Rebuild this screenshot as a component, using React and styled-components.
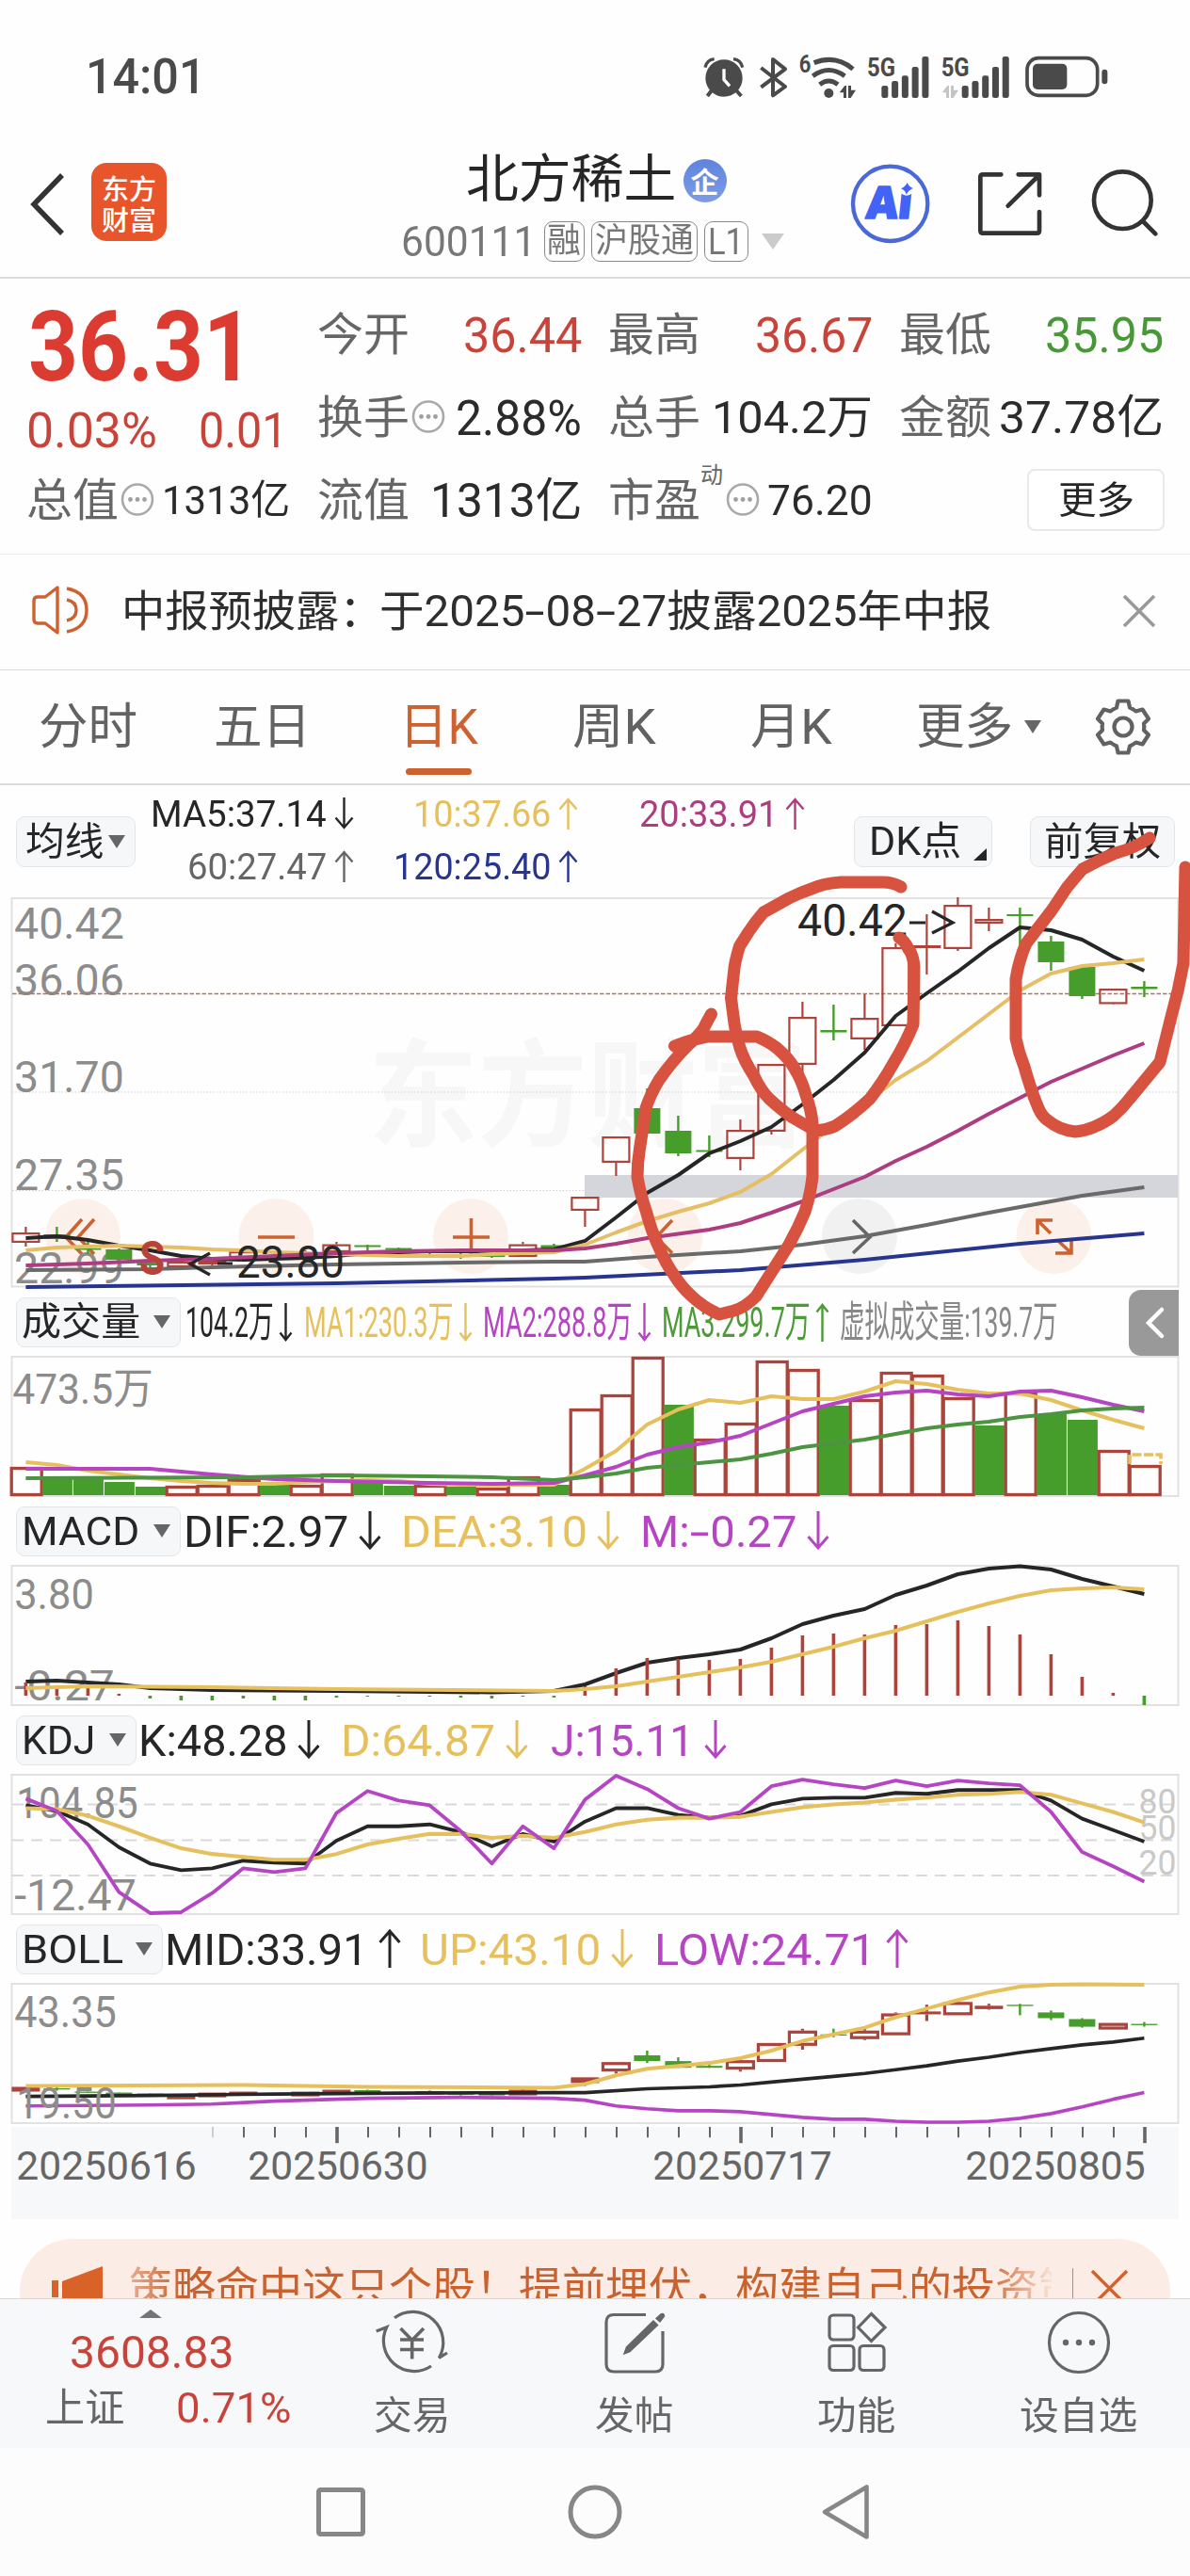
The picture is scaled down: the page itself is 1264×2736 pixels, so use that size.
import React, { useLayoutEffect, useRef, useState } from "react";
import styled, { createGlobalStyle } from "styled-components";

const INK = "#262626";
const GREY = "#666666";
const LABEL = "#8c8c8c";
const RED = "#c8443a";
const CANDLE_RED = "#ad443c";
const CANDLE_GREEN = "#479d2c";
const YELLOW = "#e5c05c";
const PURPLE = "#b545c2";
const MAGENTA = "#ad3c80";
const BLUE = "#27358f";
const ORANGE = "#cd6130";
const FONT = `Roboto, "Noto Sans CJK SC", sans-serif`;

const GlobalStyle = createGlobalStyle`
  *, *::before, *::after { box-sizing: border-box; }
  html, body { margin: 0; padding: 0; }
  body { background: #fefefe; font-family: ${FONT}; color: ${INK}; }
  svg { display: block; flex: none; overflow: visible; }
`;

const Screen = styled.div`
  width: 1264px;
  min-height: 2736px;
  display: flex;
  flex-direction: column;
  overflow: hidden;
`;

/* ---------- text that is squeezed or stretched to a set width ---------- */

const FitBox = styled.span`
  display: inline-block;
  flex: none;
  width: calc(${(p) => p.$w}px + 0.08em);
  margin: 0 -0.04em;
  padding-top: 0.05em;
  font-size: ${(p) => p.$size}px;
  line-height: 1.2;
  font-weight: ${(p) => p.$weight || 400};
  color: ${(p) => p.$color || "inherit"};
  white-space: nowrap;
`;

const FitInner = styled.span`
  display: inline-block;
  transform-origin: 0 50%;
`;

function Fit({ w, size, weight, color, children }) {
  const ref = useRef(null);
  const [scale, setScale] = useState(1);
  useLayoutEffect(() => {
    const natural = ref.current.offsetWidth;
    if (natural) setScale((w + size * 0.08) / natural);
  }, [w, size]);
  return (
    <FitBox $w={w} $size={size} $weight={weight} $color={color}>
      <FitInner ref={ref} style={{ transform: `scaleX(${scale})` }}>
        {children}
      </FitInner>
    </FitBox>
  );
}

const LongHyphen = styled.span`
  display: inline-block;
  width: 0.46em;
  text-align: center;
  transform: scaleX(1.6);
`;

const withHyphens = (text) =>
  text.split("-").flatMap((part, i) => (i ? [<LongHyphen key={i}>-</LongHyphen>, part] : [part]));

/* ---------- status bar ---------- */

const StatusBar = styled.div`
  height: 155px;
  padding: 6px 84px 0 93px;
  display: flex;
  align-items: center;
  justify-content: space-between;
`;

function UpDown({ x, color }) {
  return (
    <path
      fill={color}
      d={`M${x} 172 L${x + 17} 150 H${x + 22} V189 H${x + 13} V172 Z M${x + 28} 150 H${x + 37} V164 H${x + 52} L${x + 36} 189 H${x + 28} Z`}
    />
  );
}

function Signal({ x }) {
  return [150, 135, 118, 90, 57].map((top, i) => (
    <rect key={i} x={x + i * 32.3} y={top} width="21" height={189 - top} rx="7" fill="#4a4a4a" />
  ));
}

function StatusIcons() {
  const c = "#4a4a4a";
  return (
    <svg width="434" height="50" viewBox="50 45 1302 150" fontFamily="Roboto" fontWeight="700">
      <circle cx="119" cy="126" r="59" fill={c} />
      <path d="M59 92 Q64 68 88 65 M178 92 Q173 68 149 65" stroke={c} strokeWidth="10" fill="none" />
      <path d="M80 165 L66 183 M158 165 L174 183" stroke={c} strokeWidth="12" />
      <path d="M119 97 V131 L137 151" stroke="#fff" strokeWidth="10" fill="none" />
      <path d="M237 93 L314 153 L275 181 V66 L314 97 L237 155" stroke={c} strokeWidth="12" fill="none" strokeLinejoin="round" />
      <text x="358" y="108" fontSize="76" textLength="38" lengthAdjust="spacingAndGlyphs" fill={c}>6</text>
      <circle cx="453" cy="174" r="15" fill={c} />
      <path d="M424 146 Q453 124 482 146 M402 119 Q453 82 504 119 M406 77 Q475 50 530 97" stroke={c} strokeWidth="15" fill="none" />
      <UpDown x={487} color={c} />
      <text x="575" y="120" fontSize="84" textLength="90" lengthAdjust="spacingAndGlyphs" fill={c}>5G</text>
      <Signal x={621} />
      <text x="811" y="120" fontSize="84" textLength="90" lengthAdjust="spacingAndGlyphs" fill={c}>5G</text>
      <UpDown x={814} color="#c4c4c4" />
      <Signal x={877} />
      <rect x="1085" y="62" width="224" height="119" rx="36" fill="none" stroke={c} strokeWidth="11" />
      <rect x="1103" y="80" width="109" height="82" rx="15" fill={c} />
      <rect x="1323" y="98" width="18" height="47" rx="9" fill={c} />
    </svg>
  );
}

/* ---------- title bar ---------- */

const TitleBar = styled.header`
  height: 141px;
  border-bottom: 2px solid #dcdcdc;
  display: flex;
`;

const TitleLeft = styled.div`
  width: 427px;
  padding: 18px 0 0 32px;
  display: flex;
  align-items: flex-start;
  gap: 28px;
`;

const BackIcon = styled.svg`
  margin-top: 11px;
`;

const AppLogo = styled.div`
  width: 80px;
  height: 83px;
  padding-top: 10px;
  border-radius: 16px;
  background: #e8552b;
  color: #fff;
  display: flex;
  flex-direction: column;
  align-items: center;
  font-family: "Noto Sans CJK SC", sans-serif;
  font-weight: 500;
  font-size: 29px;
  line-height: 33px;
`;

const TitleCenter = styled.div`
  width: 406px;
  display: flex;
  flex-direction: column;
  align-items: center;
`;

const StockName = styled.div`
  height: 68px;
  padding-left: 9px;
  display: flex;
  align-items: center;
  gap: 9px;
`;

const CorpBadge = styled.span`
  width: 46px;
  height: 46px;
  margin-top: 5px;
  border-radius: 50%;
  background: linear-gradient(#5f83de, #7d9be6);
  color: #fff;
  font: 700 30px/44px "Noto Sans CJK SC", sans-serif;
  text-align: center;
`;

const StockMeta = styled.div`
  height: 66px;
  display: flex;
  align-items: center;
  color: #777;
`;

const Tag = styled.span`
  height: 43px;
  margin-left: ${(p) => p.$ml || 7}px;
  width: ${(p) => p.$w}px;
  border: 1.5px solid #8a8a8a;
  border-radius: 9px;
  display: flex;
  align-items: center;
  justify-content: center;
`;

const MetaCaret = styled.span`
  margin-left: 14px;
  border: 12px solid transparent;
  border-top: 17px solid #cbcbcb;
  border-bottom: 0;
`;

const TitleRight = styled.div`
  flex: 1;
  padding: 14px 0 0 68px;
  display: flex;
`;

function TitleActions() {
  return (
    <svg width="334" height="90" viewBox="513 387 1002 270" fill="none" stroke="#333" strokeWidth="14" strokeLinecap="round" strokeLinejoin="round">
      <circle cx="647" cy="529" r="119" stroke="#4b68d9" strokeWidth="13" />
      <text transform="translate(567 575) skewX(-6)" fontFamily="Open Sans" fontWeight="800" fontSize="142" textLength="146" lengthAdjust="spacingAndGlyphs" fill="#4263f5" stroke="#4263f5" strokeWidth="5">Ai</text>
      <circle cx="699" cy="478" r="25" fill="#fefefe" stroke="none" />
      <path d="M701 462 Q706 475 720 480 Q706 485 698 500 Q694 485 681 481 Q695 475 701 462 Z" fill="#4263f5" stroke="none" />
      <path d="M1000 436 H942 Q934 436 934 444 V615 Q934 623 942 623 H1114 Q1122 623 1122 615 V555 M1055 436 H1122 V502 M1022 536 L1118 441" />
      <circle cx="1387" cy="518" r="91" />
      <path d="M1452 585 L1492 625" />
    </svg>
  );
}

/* ---------- quote panel ---------- */

const QuoteGrid = styled.section`
  height: 293px;
  padding: 15px 30px 13px;
  border-bottom: 1px solid #ebebeb;
  display: grid;
  grid-template-columns: repeat(4, 277px);
  grid-template-rows: repeat(3, 88px);
  column-gap: 32px;
`;

const PriceCell = styled.div`
  grid-row: span 2;
  padding-top: 6px;
  display: flex;
  flex-direction: column;
`;

const PriceLine = styled.div`
  height: 100px;
  padding-left: 4px;
  display: flex;
  align-items: center;
`;

const ChangeLine = styled.div`
  height: 60px;
  margin-top: 9px;
  padding-right: 4px;
  display: flex;
  align-items: center;
  justify-content: space-between;
`;

const QuoteCell = styled.div`
  display: flex;
  align-items: center;
  justify-content: space-between;
`;

const QuoteLabel = styled.span`
  display: flex;
  align-items: center;
  gap: 4px;
  color: ${GREY};
`;

const Superscript = styled.span`
  align-self: flex-start;
  margin: -12px -1px 0 -2px;
  font-size: 24px;
  line-height: 32px;
`;

const MoreButton = styled.button`
  width: 146px;
  height: 66px;
  margin: 0 -3px 0 auto;
  padding: 0;
  border: 2px solid #e9e9e9;
  border-radius: 8px;
  background: #fff;
  font-family: inherit;
`;

function Info() {
  return (
    <svg width="36" height="36" viewBox="0 0 36 36">
      <circle cx="18" cy="17.5" r="16" fill="none" stroke="#a9a9a9" strokeWidth="2.6" />
      {[10.5, 18, 25.5].map((x) => (
        <circle key={x} cx={x} cy="17.5" r="2.4" fill="#a0a0a0" />
      ))}
    </svg>
  );
}

function Quote({ label, info, sup, value, w, size = 51, color = "#2b2b2b" }) {
  return (
    <QuoteCell>
      <QuoteLabel>
        <Fit w={94} size={48}>{label}</Fit>
        {sup && <Superscript>{sup}</Superscript>}
        {info && <Info />}
      </QuoteLabel>
      <Fit w={w} size={size} color={color}>{value}</Fit>
    </QuoteCell>
  );
}

/* ---------- notice ---------- */

const Notice = styled.div`
  height: 123px;
  padding: 0 36px 4px 34px;
  border-bottom: 1.5px solid #dadada;
  display: flex;
  align-items: center;
`;

const NoticeText = styled.div`
  flex: 1;
  padding-left: 36px;
  display: flex;
  align-items: center;
`;

/* ---------- tabs ---------- */

const Tabs = styled.nav`
  height: 122px;
  border-bottom: 2px solid #dadada;
  display: flex;
`;

const Tab = styled.div`
  position: relative;
  width: 187px;
  padding-left: ${(p) => p.$left || 0}px;
  padding-right: ${(p) => p.$right || 0}px;
  display: flex;
  align-items: center;
  justify-content: center;
  gap: 13px;
  color: ${(p) => (p.$active ? ORANGE : "#626262")};
  &::after {
    content: "";
    display: ${(p) => (p.$active ? "block" : "none")};
    position: absolute;
    left: 57px;
    top: 104px;
    width: 70px;
    height: 7px;
    border-radius: 4px;
    background: ${ORANGE};
  }
`;

const Caret = styled.span`
  border: ${(p) => (p.$s || 18) / 2}px solid transparent;
  border-top: 14px solid ${GREY};
  border-bottom: 0;
`;

const GearSlot = styled.div`
  flex: 1;
  display: flex;
  align-items: center;
  justify-content: center;
`;

function Gear() {
  return (
    <svg width="62" height="62" viewBox="0 0 62 62" fill="none" stroke="#626262" strokeWidth="4.2" strokeLinejoin="round">
      <path d="M25.500 3.500 H36.500 L38 10.500 Q41.500 12 44.500 14.500 L51.500 12.500 L58 22.500 L53 27.500 Q53.600 31 53 34.500 L58 39.500 L51.500 49.500 L44.500 47.500 Q41.500 50 38 51.500 L36.500 58.500 H25.500 L24 51.500 Q20.500 50 17.500 47.500 L10.500 49.500 L4 39.500 L9 34.500 Q8.400 31 9 27.500 L4 22.500 L10.500 12.500 L17.500 14.500 Q20.500 12 24 10.500 Z" />
      <circle cx="31" cy="31" r="9.500" />
    </svg>
  );
}

/* ---------- indicator legends ---------- */

const ChartArea = styled.main`
  position: relative;
`;

const Pill = styled.span`
  flex: none;
  width: ${(p) => p.$w}px;
  height: ${(p) => p.$h || 53}px;
  padding: 0 10px 0 ${(p) => p.$pl || 7}px;
  border: 1.5px solid #e3e6e9;
  border-radius: 9px;
  background: #f6f7f9;
  display: flex;
  align-items: center;
  justify-content: space-between;
`;

const CornerMark = styled.span`
  align-self: flex-end;
  margin: 0 -5px 6px 0;
  border-left: 14px solid transparent;
  border-bottom: 13px solid ${INK};
`;

const AverageBar = styled.div`
  height: 119px;
  padding-left: 17px;
  display: flex;
  align-items: center;
`;

const AverageGrid = styled.div`
  height: 119px;
  padding-top: 2px;
  display: grid;
  grid-template-columns: 232px 238px 241px;
  grid-template-rows: 56px 56px;
`;

const AverageItem = styled.div`
  display: flex;
  align-items: center;
  justify-content: flex-end;
  gap: 9px;
`;

const AverageButtons = styled.div`
  display: flex;
  gap: 40px;
  margin-left: 52px;
`;

const IndicatorBar = styled.div`
  height: 72px;
  padding-left: 17px;
  display: flex;
  align-items: center;
`;

const IndicatorItem = styled.span`
  margin-left: ${(p) => p.$ml}px;
  display: flex;
  align-items: center;
  gap: ${(p) => p.$gap}px;
`;

const CollapseButton = styled.button`
  width: 53px;
  height: 70px;
  margin: 2px 12px 0 auto;
  padding: 0 0 0 17px;
  border: 0;
  border-radius: 13px 0 0 13px;
  background: #999;
`;

function Arrow({ up, color, w = 24, h = 41, sw = 3 }) {
  const m = w / 2;
  const d = up
    ? `M${m} ${h} V2 M1.500 ${m + 2} L${m} 2 L${w - 1.5} ${m + 2}`
    : `M${m} 0 V${h - 2} M1.500 ${h - m - 2} L${m} ${h - 2} L${w - 1.5} ${h - m - 2}`;
  return (
    <svg width={w} height={h} viewBox={`0 0 ${w} ${h}`} fill="none" stroke={color} strokeWidth={sw}>
      <path d={d} />
    </svg>
  );
}

function Average({ text, w, up, color }) {
  return (
    <AverageItem>
      <Fit w={w} size={39.5} color={color}>{text}</Fit>
      <Arrow up={up} color={color} w={21} h={34} sw={2.4} />
    </AverageItem>
  );
}

function Indicator({ name, nameW, pillW, size = 47, items, cjk, children }) {
  return (
    <IndicatorBar>
      <Pill $w={pillW}>
        <Fit w={nameW} size={cjk ? 41 : 43}>{name}</Fit>
        <Caret />
      </Pill>
      {items.map((it) => (
        <IndicatorItem key={it.text} $ml={it.ml} $gap={it.gap ?? 12}>
          <Fit w={it.w} size={size} color={it.color}>{withHyphens(it.text)}</Fit>
          {it.dir && <Arrow up={it.dir === "up"} color={it.color} w={it.aw || 24} sw={it.aw ? 2.4 : 3} />}
        </IndicatorItem>
      ))}
      {children}
    </IndicatorBar>
  );
}

/* ---------- charts ---------- */

const X = (i) => 27.4 + 33 * i;
const path = (list) =>
  "M" + list.map((p, i) => (Array.isArray(p) ? `${X(p[0])} ${p[1]}` : `${X(i)} ${p}`)).join(" L");

function Line({ data, color, w = 4 }) {
  return <path d={path(data)} fill="none" stroke={color} strokeWidth={w} strokeLinejoin="round" />;
}

function Frame({ y, h }) {
  return <rect x="12.500" y={y} width="1239" height={h} fill="none" stroke="#e2e2e2" strokeWidth="2" />;
}

function Label({ x, y, w, size = 47, color = LABEL, weight = 400, children }) {
  return (
    <text x={x - size * 0.04} y={y} fontFamily={FONT} fontSize={size} fontWeight={weight} fill={color} textLength={w + size * 0.08} lengthAdjust="spacingAndGlyphs">
      {children}
    </text>
  );
}

function Chart({ top, height, drawn = height, children }) {
  return (
    <svg width="1264" height={drawn} viewBox={`0 ${top} 1264 ${height}`} preserveAspectRatio="none">
      {children}
    </svg>
  );
}

function Candles({ data, sw = 2.2 }) {
  return data.map(([c, hi, a, b, lo], i) => {
    const x = X(i);
    const h = b - a;
    if (c === "g") {
      return (
        <g key={i} fill={CANDLE_GREEN}>
          <rect x={x - 1.2} y={hi} width="2.400" height={lo - hi} />
          <rect x={x - 14} y={a} width="28" height={Math.max(h, 1.3)} />
        </g>
      );
    }
    return (
      <g key={i} stroke={CANDLE_RED} strokeWidth={sw} fill="none">
        <path d={`M${x} ${hi} V${a} M${x} ${b} V${lo}`} />
        {h > sw * 2 ? (
          <rect x={x - 14} y={a + sw / 2} width="28" height={h - sw} />
        ) : (
          <rect x={x - 15} y={a} width="30" height={Math.max(h, 2)} fill={CANDLE_RED} stroke="none" />
        )}
      </g>
    );
  });
}

const candles = [
  ["r", 1303, 1309, 1320, 1324], ["g", 1303, 1311, 1316, 1319], ["g", 1318, 1326, 1327.5, 1332],
  ["g", 1326, 1327, 1338, 1338], ["g", 1338, 1341, 1344, 1347], ["r", 1338, 1340, 1346, 1346],
  ["r", 1338, 1339, 1343, 1345], ["r", 1329, 1329, 1336, 1336], ["g", 1332, 1333, 1335, 1338],
  ["r", 1328, 1330, 1336, 1338], ["r", 1319, 1321.5, 1330, 1330], ["g", 1322, 1322.5, 1324.5, 1328],
  ["g", 1325, 1325.5, 1327.5, 1328], ["r", 1329, 1329, 1331, 1335], ["g", 1331, 1333, 1334.5, 1337],
  ["g", 1331, 1333, 1335, 1336], ["r", 1319, 1321.5, 1335, 1335], ["g", 1321, 1322.5, 1327, 1327],
  ["r", 1271, 1271, 1286, 1303], ["r", 1207, 1207, 1235, 1249], ["g", 1156, 1177, 1204, 1204],
  ["g", 1185, 1201, 1225, 1228], ["g", 1206, 1221.5, 1223.5, 1229], ["r", 1189, 1200, 1231, 1243],
  ["r", 1130, 1130, 1202, 1205], ["r", 1064, 1080, 1131, 1145], ["g", 1067, 1094, 1096.5, 1105],
  ["r", 1056, 1081, 1104, 1115], ["r", 1002, 1006, 1090, 1090], ["r", 971, 1004, 1007, 1035],
  ["r", 953, 961, 1008, 1010], ["r", 964, 976, 981, 989], ["g", 964, 971, 973, 1012],
  ["g", 994, 1000, 1022, 1031], ["g", 1026, 1027, 1058, 1061], ["r", 1050, 1050, 1066.5, 1066],
  ["g", 1042, 1048, 1050.5, 1059],
];

const ma5 = [1315, 1313, 1317, 1323, 1328, 1334, 1337, 1338, 1337, 1336, 1334, 1331, 1330, 1329, 1329, 1329, 1328, 1327, 1318, 1293, 1267, 1248, 1225, 1212, 1197, 1173, 1147, 1118, 1079, 1055, 1032, 1007, 985, 988, 998, 1016, 1031];
const ma10 = [1328, 1325, 1324, 1323, 1324, 1325, 1327, 1328, 1330, 1331, 1332, 1333, 1334, 1334, 1334, 1332, 1331, 1330, 1322, 1309, 1297, 1287, 1278, 1266, 1247, 1221, 1196, 1173, 1147, 1127, 1102, 1077, 1052, 1034, 1026, 1023, 1019];
const ma20 = [[0, 1344], [2, 1342], [4, 1339], [6, 1337], [8, 1334], [10, 1331], [12, 1329], [14, 1328], [16, 1328], [17, 1328], [18, 1326], [19, 1321], [20, 1315], [22, 1306], [23, 1299], [24, 1288], [25, 1276], [26, 1263], [27, 1250], [28, 1233], [29, 1218], [30, 1201], [31, 1183], [32, 1166], [33, 1149], [34, 1135], [35, 1121], [36, 1108]];
const ma60 = [[0, 1349], [4, 1348], [6, 1346], [10, 1343], [14, 1341], [17, 1340], [18, 1340], [20, 1335], [23, 1329], [25, 1322], [27, 1313], [29, 1301], [31, 1288], [33, 1276], [34, 1270], [36, 1261]];
const ma120 = [[0, 1367], [10, 1363], [17, 1358], [18, 1357], [23, 1349], [27, 1338], [32, 1321], [36, 1310]];

function ToolCircle({ x, grey, d }) {
  return (
    <g>
      <circle cx={x} cy="1313" r="40" fill={grey ? "#f1f1f1" : "#fbf1ea"} />
      <path d={d} stroke={grey ? GREY : ORANGE} strokeWidth="3.600" fill="none" />
    </g>
  );
}

const tools = [
  { x: 88, d: "M87 1295 L70 1314 L87 1332 M100 1295 L83 1314 L100 1332" },
  { x: 293.5, d: "M274 1314 H313" },
  { x: 500, d: "M481 1314 H520 M500.500 1294 V1333" },
  { x: 706.5, d: "M714 1296 L697 1314 L714 1331" },
  { x: 913, grey: true, d: "M906 1296 L924 1314 L906 1331" },
  { x: 1119.5, d: "M1102 1311 V1296 H1118 M1102 1296 L1116 1310 M1138 1316 V1331 H1121 M1138 1331 L1123 1317" },
];

function CandleChart() {
  return (
    <Chart top={953} height={415}>
      <text x="391" y="1208" fontFamily="Noto Sans CJK SC" fontWeight="700" fontSize="124" textLength="466" lengthAdjust="spacingAndGlyphs" fill="#f7f7f8">东方财富</text>
      <Frame y={954} h={412.5} />
      <path d="M13 1160 H1251 M13 1264.500 H1251" stroke="#cfcfcf" strokeWidth="1.200" strokeDasharray="1.500 2" />
      <rect x="621" y="1248" width="630" height="24" fill="#d5d6dc" />
      {tools.map((t) => <ToolCircle key={t.x} {...t} />)}
      <Label x={17} y={997} w={113}>40.42</Label>
      <Label x={17} y={1057} w={113}>36.06</Label>
      <Label x={17} y={1160} w={113}>31.70</Label>
      <Label x={17} y={1264} w={113}>27.35</Label>
      <Label x={17} y={1363} w={113}>22.99</Label>
      <path d="M13 1055.500 H1251" stroke="#b3745c" strokeWidth="1.500" strokeDasharray="4.500 2" />
      <Candles data={candles} />
      <Line data={ma5} color={INK} />
      <Line data={ma10} color="#e5be66" />
      <Line data={ma20} color={MAGENTA} />
      <Line data={ma60} color="#6a6a6a" />
      <Line data={ma120} color={BLUE} />
      <Label x={150} y={1354} w={23} size={50} weight={700} color="#b8423a">S</Label>
      <path d="M223 1331 L202 1342.500 L223 1354 M231 1342 H247" stroke={INK} strokeWidth="3.200" fill="none" />
      <Label x={253} y={1357} w={111} size={48} color={INK}>23.80</Label>
      <Label x={849} y={994} w={113} size={48} color={INK}>40.42</Label>
      <path d="M966 980 H983 M990 968 L1012 980 L990 991" stroke={INK} strokeWidth="3.200" fill="none" />
    </Chart>
  );
}

const volumes = "r1558 g1569 g1571 g1574 g1579 r1578 r1577 r1571 g1577 r1577 r1565 g1575 g1578 r1577 g1579 r1580 r1568 g1577 r1496 r1481 r1441 g1492 r1528 r1511 r1445 r1454 g1493 r1486 r1457 r1460 r1484 g1514 r1479 g1502 g1508 r1540 r1556"
  .split(" ")
  .map((s) => [s[0], +s.slice(1)]);
const vma1 = [1553, 1556, 1562, 1566, 1570, 1573, 1575, 1576, 1576, 1574, 1573, 1572, 1573, 1576, 1577, 1577, 1577, 1577, 1560, 1541, 1513, 1497, 1487, 1490, 1483, 1486, 1486, 1478, 1467, 1470, 1476, 1480, 1480, 1487, 1498, 1508, 1517];
const vma2 = [[0, 1560], [4, 1560], [6, 1566], [8, 1571], [10, 1573], [13, 1575], [15, 1576], [17, 1575], [18, 1567], [19, 1558], [20, 1545], [21, 1537], [22, 1532], [23, 1525], [24, 1512], [25, 1499], [26, 1491], [27, 1483], [28, 1479], [29, 1477], [30, 1481], [31, 1483], [32, 1478], [33, 1477], [34, 1484], [35, 1492], [36, 1499]];
const vma3 = [[0, 1570], [7, 1569], [10, 1567], [13, 1568], [15, 1569], [17, 1572], [18, 1569], [19, 1565], [20, 1559], [21, 1556], [22, 1553], [23, 1550], [24, 1544], [25, 1537], [26, 1533], [27, 1529], [28, 1523], [29, 1517], [30, 1513], [31, 1510], [32, 1505], [33, 1502], [34, 1498], [35, 1496], [36, 1495]];

function VolumeChart() {
  return (
    <Chart top={1440} height={150}>
      <Frame y={1441} h={148} />
      <Label x={15} y={1491} w={146} size={45}>473.5万</Label>
      {volumes.map(([c, y], i) =>
        c === "g" ? (
          <rect key={i} x={X(i) - 15.5} y={y} width="32" height={1588 - y} fill={CANDLE_GREEN} />
        ) : (
          <rect key={i} x={X(i) - 15.2} y={y + 1.5} width="32" height={1586 - y} fill="#fefefe" stroke={CANDLE_RED} strokeWidth="3.300" />
        )
      )}
      <path d="M1200 1555 V1545 H1233 V1555" fill="none" stroke={YELLOW} strokeWidth="3.600" strokeDasharray="10 2.500" />
      <Line data={vma1} color={YELLOW} />
      <Line data={vma2} color={PURPLE} />
      <Line data={vma3} color="#4c9440" />
    </Chart>
  );
}

const macdBars = [1787, 1793, 1793, 1799, 1804, 1806, 1806, 1804, 1806, 1806, 1803, 1802, 1802, 1802, 1803, 1804, 1802, 1803, 1791, 1772, 1761, 1762, 1763, 1762, 1750, 1737, 1735, 1736, 1726, 1725, 1721, 1727, 1736, 1757, 1781, 1798, 1811];
const dif = [[0, 1786], [1, 1785], [2, 1787], [3, 1789], [4, 1793], [6, 1795], [10, 1796], [15, 1797.5], [17, 1796], [18, 1789], [19, 1777], [20, 1766], [21, 1761], [22, 1757], [23, 1752], [24, 1740], [25, 1725], [26, 1716], [27, 1709], [28, 1694], [29, 1684], [30, 1672], [31, 1666], [32, 1663.5], [33, 1667], [34, 1677], [35, 1685], [36, 1693]];
const dea = [[0, 1793], [2, 1791], [6, 1792], [10, 1794], [17, 1796], [18, 1794], [19, 1791], [20, 1786], [21, 1781], [22, 1776], [23, 1771], [24, 1765], [25, 1757], [26, 1749], [27, 1740], [28, 1732], [29, 1722], [30, 1712], [31, 1703], [32, 1695], [33, 1689], [34, 1687], [35, 1686], [36, 1688]];

function MacdChart() {
  return (
    <Chart top={1662} height={150}>
      <Frame y={1663} h={148} />
      <Label x={17} y={1709} w={81} size={45}>3.80</Label>
      <Label x={17} y={1806} w={103} size={45}>-0.27</Label>
      <Line data={dif} color={INK} />
      {macdBars.map((y, i) => (
        <rect key={i} x={X(i) - 1.8} y={Math.min(y, 1801)} width="3.600" height={Math.abs(1801 - y)} fill={y < 1801 ? CANDLE_RED : CANDLE_GREEN} />
      ))}
      <Line data={dea} color={YELLOW} />
    </Chart>
  );
}

const kLine = [1916, 1922, 1936, 1960, 1977, 1984, 1982, 1974, 1976, 1977, 1953, 1938, 1938, 1936, 1944, 1959, 1946, 1954, 1933, 1919, 1919, 1926, 1929, 1927, 1915, 1909, 1908, 1908, 1903, 1904, 1900, 1900, 1900, 1911, 1930, 1942, 1954];
const dLine = [1919, 1920, 1927, 1938, 1950, 1961, 1967, 1970, 1973, 1973, 1967, 1957, 1951, 1946, 1946, 1950, 1948, 1950, 1944, 1936, 1931, 1929, 1929, 1928, 1923, 1918, 1915, 1913, 1910, 1908, 1905, 1904, 1902, 1905, 1914, 1923, 1934];
const jLine = [1909, 1922, 1957, 2007, 2029, 2028, 2008, 1982, 1986, 1982, 1924, 1901, 1911, 1916, 1943, 1977, 1938, 1961, 1910, 1885, 1899, 1919, 1930, 1923, 1896, 1889, 1894, 1898, 1890, 1896, 1890, 1893, 1895, 1923, 1965, 1980, 1996];

function KdjChart() {
  return (
    <Chart top={1883} height={148} drawn={150}>
      <Frame y={1884} h={146} />
      <path d="M13 1915 H1250 M13 1952.500 H1250 M13 1989.500 H1250" stroke="#d9d9d9" strokeWidth="2" strokeDasharray="12 8" />
      <Label x={1211} y={1924} w={37} size={37} color="#c9c9c9">80</Label>
      <Label x={1211} y={1952} w={37} size={37} color="#c9c9c9">50</Label>
      <Label x={1211} y={1989} w={37} size={37} color="#c9c9c9">20</Label>
      <Label x={19} y={1929.5} w={126} size={45}>104.85</Label>
      <Label x={17} y={2026.5} w={126} size={45}>-12.47</Label>
      <Line data={kLine} color={INK} w={3.8} />
      <Line data={dLine} color={YELLOW} />
      <Line data={jLine} color={PURPLE} w={3.8} />
    </Chart>
  );
}

const bollCandles = [
  ["r", 2211, 2211, 2216, 2216], ["g", 2210, 2212.5, 2213.5, 2215], ["g", 2216, 2216, 2217, 2217],
  ["g", 2217, 2217, 2221, 2221], ["g", 2218, 2218, 2221, 2221], ["r", 2219, 2219, 2224, 2224],
  ["r", 2217, 2217, 2222, 2222], ["r", 2216, 2216, 2220, 2220], ["g", 2218, 2218, 2220, 2220],
  ["r", 2216, 2216, 2221, 2221], ["r", 2214, 2214, 2219, 2219], ["g", 2214, 2214.5, 2218, 2218],
  ["g", 2217, 2217, 2218, 2218], ["r", 2215, 2215.5, 2219, 2219], ["g", 2217, 2218, 2219, 2220],
  ["g", 2217, 2217, 2220, 2220], ["r", 2213, 2214, 2220, 2220], ["g", 2216, 2216, 2218, 2218],
  ["r", 2201, 2201, 2207, 2210], ["r", 2185, 2185, 2195, 2197], ["g", 2173, 2178, 2184, 2186],
  ["g", 2180, 2184, 2191, 2191], ["g", 2186, 2189, 2191, 2191], ["r", 2181, 2183, 2193, 2195],
  ["r", 2165, 2165, 2185, 2185], ["r", 2150, 2152, 2168, 2172], ["g", 2150, 2156, 2157, 2159],
  ["r", 2148, 2152, 2161, 2162], ["r", 2133, 2134, 2157, 2157], ["r", 2125, 2132, 2135, 2142],
  ["r", 2121, 2122, 2136, 2136], ["r", 2124, 2126, 2129.5, 2130], ["g", 2124, 2125, 2126, 2136],
  ["g", 2131, 2133, 2139, 2141], ["g", 2139, 2140, 2148, 2149], ["r", 2144, 2144, 2151, 2151],
  ["g", 2143, 2145, 2146, 2148],
];
const bollUp = [[0, 2210], [7, 2209], [11, 2211], [17, 2212], [18, 2208], [19, 2199], [20, 2192], [21, 2189], [22, 2186], [23, 2181], [24, 2173], [25, 2163], [26, 2156], [27, 2149], [28, 2138], [29, 2129], [30, 2120], [31, 2112], [32, 2106], [33, 2104], [34, 2103.5], [36, 2104]];
const bollMid = [[0, 2221], [4, 2220], [8, 2218.5], [12, 2217.5], [17, 2217], [18, 2217], [20, 2213], [22, 2211], [23, 2209], [24, 2206], [25, 2203], [26, 2200], [27, 2197], [28, 2193], [29, 2189], [30, 2184], [31, 2180], [32, 2175], [33, 2171], [34, 2167], [35, 2164], [36, 2160]];
const bollLow = [[0, 2231], [4, 2230], [6, 2229], [8, 2226], [11, 2223], [14, 2222], [17, 2223], [18, 2225], [19, 2231], [20, 2234], [21, 2236], [22, 2236], [23, 2237], [24, 2240], [25, 2243], [26, 2245], [27, 2245], [28, 2247], [29, 2248], [30, 2248], [31, 2247], [32, 2244], [33, 2239], [34, 2232], [35, 2224], [36, 2217]];

function BollChart() {
  return (
    <Chart top={2102} height={148} drawn={150}>
      <Frame y={2103} h={146} />
      <Candles data={bollCandles} sw={3.2} />
      <Line data={bollUp} color={YELLOW} />
      <Line data={bollMid} color={INK} w={3.6} />
      <Line data={bollLow} color={PURPLE} w={3.6} />
      <Label x={17} y={2148.5} w={105} size={45}>43.35</Label>
      <Label x={19} y={2244.5} w={103} size={45}>19.50</Label>
    </Chart>
  );
}

const majors = [10, 23, 36];

function TimeAxis() {
  const ticks = Array.from({ length: 31 }, (_, k) => k + 6);
  return (
    <Chart top={2250} height={100} drawn={101}>
      <rect x="12" y="2253" width="1240" height="97" fill="#f7f8fa" />
      {ticks.map((i) => {
        const major = majors.includes(i);
        return (
          <path key={i} d={`M${X(i) + 0.6} 2253 V${major ? 2270 : 2264}`} stroke={i === 6 ? "#ccc" : GREY} strokeWidth={major ? 3.6 : 2} />
        );
      })}
      <Label x={19} y={2308} w={188} size={43} color={GREY}>20250616</Label>
      <Label x={265} y={2308} w={188} size={43} color={GREY}>20250630</Label>
      <Label x={695} y={2308} w={187} size={43} color={GREY}>20250717</Label>
      <Label x={1027} y={2308} w={188} size={43} color={GREY}>20250805</Label>
    </Chart>
  );
}

const MarkerLayer = styled.svg`
  position: absolute;
  left: 0;
  top: 0;
  pointer-events: none;
`;

function Markers() {
  return (
    <MarkerLayer width="1264" height="600" viewBox="0 834 1264 600" fill="none" stroke="#d75340" strokeWidth="13" strokeLinecap="round" strokeLinejoin="round">
      <path d="M957 942 Q948 937 938 937 H893 Q875 938 862 944 Q850 948 838 954 L811 969 Q803 978 795 990 L785.500 1005 Q781 1020 780 1028 L776.500 1060 L780 1087 Q782 1100 786 1113 Q790 1126 801 1143 Q808 1158 817 1167 Q830 1179 842 1187 L866 1201 Q878 1200 887 1196 Q906 1184 924 1167 Q938 1149 948.600 1130 Q962 1108 970 1088 L971 1027 Q970 1014 965 1008 Q961 999 955 996" />
      <path d="M716.500 1111 Q735 1104 751 1101 H804 Q816 1106 825 1113 Q838 1124 844 1135 Q852 1148 856 1163 Q862 1180 863 1193 V1250 Q861 1268 855 1287 Q848 1304 838 1322 L803 1377 Q792 1388 780 1392 L764 1396 Q748 1389 735 1377 Q724 1367 716.500 1355 Q707 1342 700 1325 Q692 1308 686.500 1287 Q680 1268 677 1250 Q677 1235 679.500 1220 L686 1177 Q691 1162 700 1147 Q714 1127 731 1110 Q741 1101 747 1093 Q751 1085 755.500 1077" />
      <path d="M1221 890 Q1205 901 1185 906 Q1166 914 1150 923 Q1141 933 1133 943 L1117 967 L1090 1002 Q1082 1020 1079 1040 V1103 Q1082 1118 1088 1133 Q1095 1158 1103 1177 Q1107 1186 1113 1190 Q1125 1200 1142 1202 Q1153 1201 1162 1197 Q1174 1192 1183 1185 Q1192 1177 1199 1168 L1232 1128 Q1238 1104 1244 1080 Q1252 1052 1257 1023 L1259 921" />
    </MarkerLayer>
  );
}

/* ---------- promo banner ---------- */

const BannerSlot = styled.div`
  height: 84px;
  padding: 21px 21px 0;
  overflow: hidden;
`;

const Banner = styled.div`
  height: 112px;
  padding: 28px 44px 0 34px;
  border-radius: 56px;
  background: #fbede5;
  display: flex;
  align-items: flex-start;
`;

const BannerText = styled.div`
  width: 982px;
  margin: -4px 0 0 27px;
  overflow: hidden;
  white-space: nowrap;
  font-size: 46px;
  line-height: 56px;
  color: #c9622f;
  mask-image: linear-gradient(90deg, rgba(0, 0, 0, 0.45), #000 55px, #000 910px, transparent 985px);
`;

const BannerDivider = styled.span`
  width: 1.5px;
  height: 42px;
  margin: 3px 19px 0 22px;
  background: #cc8259;
`;

/* ---------- bottom bar ---------- */

const BottomBar = styled.footer`
  height: 159px;
  border-top: 1.5px solid #d5d6d8;
  background: #f7f8fa;
  display: flex;
`;

const IndexBlock = styled.div`
  width: 320px;
  padding-top: 11px;
  display: flex;
  flex-direction: column;
  align-items: center;
`;

const IndexArrow = styled.span`
  border: 12.5px solid transparent;
  border-bottom: 9px solid #757575;
  border-top: 0;
`;

const IndexValue = styled.div`
  height: 58px;
  margin: 7px 0 0 2px;
  display: flex;
  align-items: center;
`;

const IndexRow = styled.div`
  width: 320px;
  height: 60px;
  padding: 1px 12px 0 50px;
  display: flex;
  align-items: center;
  gap: 58px;
`;

const Action = styled.div`
  width: 236px;
  padding-top: 6px;
  display: flex;
  flex-direction: column;
  align-items: center;
  gap: 12px;
  color: ${GREY};
`;

const SystemNav = styled.div`
  height: 136px;
  background: #fcfcfc;
  display: flex;
  justify-content: center;
`;

const NavSlot = styled.div`
  width: 270px;
  display: flex;
  align-items: center;
  justify-content: center;
`;

const actionIcons = {
  trade: (
    <>
      <path d="M21 13.700 A32.500 32.500 0 0 1 68.300 56.300 L77 51" />
      <path d="M60 65 A32.500 32.500 0 0 1 12.700 23.700 L1.700 28" />
      <path d="M27.500 25 L39.700 37.500 L52 25 M39.700 37.500 V57.500 M27 37 H52 M27 47.500 H52" strokeWidth="3.600" />
    </>
  ),
  post: (
    <>
      <path d="M52 10.500 H18 Q10 10.500 10 18.500 V63 Q10 71 18 71 H62 Q70 71 70 63 V28" />
      <path d="M60 17 L64.500 21.500 L35 49.500 L29 52 L31.500 45 Z M63 14.500 L68 10 Q71 8.500 71.500 12 L67 18 Z" fill={GREY} strokeWidth="1.500" />
    </>
  ),
  grid: (
    <>
      <rect x="11" y="11" width="26" height="26" rx="4" />
      <rect x="11" y="43.500" width="26" height="26" rx="4" />
      <rect x="43" y="43.500" width="26" height="26" rx="4" />
      <path d="M55.500 9.500 L70 24 L55.500 38.500 L41.500 24 Z" />
    </>
  ),
  more: (
    <>
      <circle cx="40" cy="40" r="31.500" />
      {[26, 40, 54].map((x) => <circle key={x} cx={x} cy="40" r="3.200" fill={GREY} stroke="none" />)}
    </>
  ),
};

const actions = [
  { icon: "trade", label: "交易", w: 78 },
  { icon: "post", label: "发帖", w: 80 },
  { icon: "grid", label: "功能", w: 80 },
  { icon: "more", label: "设自选", w: 122 },
];

export default function App() {
  return (
    <Screen>
      <GlobalStyle />

      <StatusBar>
        <Fit w={123} size={51} weight={500} color="#4a4a4a">14:01</Fit>
        <StatusIcons />
      </StatusBar>

      <TitleBar>
        <TitleLeft>
          <BackIcon width="37" height="66" viewBox="0 0 37 66" fill="none" stroke="#333" strokeWidth="5.500">
            <path d="M34 2 L4 33 L34 64" />
          </BackIcon>
          <AppLogo>
            <span>东方</span>
            <span>财富</span>
          </AppLogo>
        </TitleLeft>
        <TitleCenter>
          <StockName>
            <Fit w={219} size={55}>北方稀土</Fit>
            <CorpBadge>企</CorpBadge>
          </StockName>
          <StockMeta>
            <Fit w={140} size={45}>600111</Fit>
            <Tag $w={43} $ml={10}><Fit w={33} size={36}>融</Fit></Tag>
            <Tag $w={113}><Fit w={102} size={36}>沪股通</Fit></Tag>
            <Tag $w={47}><Fit w={35} size={39}>L1</Fit></Tag>
            <MetaCaret />
          </StockMeta>
        </TitleCenter>
        <TitleRight>
          <TitleActions />
        </TitleRight>
      </TitleBar>

      <QuoteGrid>
        <PriceCell>
          <PriceLine><Fit w={231} size={104} weight={700} color="#dc3b31">36.31</Fit></PriceLine>
          <ChangeLine>
            <Fit w={135} size={51} color={RED}>0.03%</Fit>
            <Fit w={90} size={51} color={RED}>0.01</Fit>
          </ChangeLine>
        </PriceCell>
        <Quote label="今开" value="36.44" w={122} color={RED} />
        <Quote label="最高" value="36.67" w={121} color={RED} />
        <Quote label="最低" value="35.95" w={122} color="#489837" />
        <Quote label="换手" info value="2.88%" w={130} />
        <Quote label="总手" value="104.2万" w={167} size={49} />
        <Quote label="金额" value="37.78亿" w={171} size={49} />
        <Quote label="总值" info value="1313亿" w={133} size={43} />
        <Quote label="流值" value="1313亿" w={157} size={50} />
        <Quote label="市盈" sup="动" info value="76.20" w={108} size={45} />
        <QuoteCell>
          <MoreButton><Fit w={78} size={40} color={INK}>更多</Fit></MoreButton>
        </QuoteCell>
      </QuoteGrid>

      <Notice>
        <svg width="61" height="54" viewBox="0 0 61 54" fill="none" stroke={ORANGE} strokeWidth="3.400" strokeLinejoin="round">
          <path d="M27 3 V51 L14 41 H6 Q2 41 2 37 V17 Q2 13 6 13 H14 Z" />
          <path d="M37 16 Q47 18 47 27 Q47 36 37 38 M37 4 Q58 8 58 27 Q58 46 37 50" />
        </svg>
        <NoticeText>
          <Fit w={274} size={46} color="#2e2e2e">中报预披露：</Fit>
          <Fit w={647} size={46} color="#2e2e2e">{withHyphens("于2025-08-27披露2025年中报")}</Fit>
        </NoticeText>
        <svg width="36" height="36" viewBox="0 0 36 36" stroke="#999" strokeWidth="3.600">
          <path d="M2 3 L34 35 M34 3 L2 35" />
        </svg>
      </Notice>

      <Tabs>
        <Tab><Fit w={101} size={52}>分时</Fit></Tab>
        <Tab $right={4}><Fit w={99} size={52}>五日</Fit></Tab>
        <Tab $active $right={2}><Fit w={80} size={52}>日K</Fit></Tab>
        <Tab $right={4}><Fit w={85} size={52}>周K</Fit></Tab>
        <Tab $right={2}><Fit w={83} size={52}>月K</Fit></Tab>
        <Tab $left={24}><Fit w={99} size={52}>更多</Fit><Caret /></Tab>
        <GearSlot><Gear /></GearSlot>
      </Tabs>

      <ChartArea>
        <AverageBar>
          <Pill $w={127} $h={54} $pl={11}>
            <Fit w={80} size={41}>均线</Fit>
            <Caret />
          </Pill>
          <AverageGrid>
            <Average text="MA5:37.14" w={184} color={INK} />
            <Average text="10:37.66" w={143} up color={YELLOW} />
            <Average text="20:33.91" w={144} up color={MAGENTA} />
            <Average text="60:27.47" w={145} up color={GREY} />
            <Average text="120:25.40" w={164} up color={BLUE} />
          </AverageGrid>
          <AverageButtons>
            <Pill $w={147} $h={54} $pl={17}>
              <Fit w={95} size={42}>DK点</Fit>
              <CornerMark />
            </Pill>
            <Pill $w={154} $h={54} $pl={16}>
              <Fit w={121} size={41}>前复权</Fit>
            </Pill>
          </AverageButtons>
        </AverageBar>
        <CandleChart />

        <Indicator
          name="成交量" nameW={123} pillW={175} cjk size={45}
          items={[
            { text: "104.2万", w: 90, ml: 7, gap: 7, dir: "down", aw: 15, color: INK },
            { text: "MA1:230.3万", w: 155, ml: 14, gap: 7, dir: "down", aw: 15, color: YELLOW },
            { text: "MA2:288.8万", w: 155, ml: 13, gap: 7, dir: "down", aw: 15, color: PURPLE },
            { text: "MA3:299.7万", w: 154, ml: 13, gap: 7, dir: "up", aw: 15, color: "#4c9a38" },
            { text: "虚拟成交量:139.7万", w: 228, ml: 13, color: "#888" },
          ]}
        >
          <CollapseButton>
            <svg width="22" height="42" viewBox="0 0 22 42" fill="none" stroke="#fff" strokeWidth="4.500" strokeLinecap="round">
              <path d="M18 7 L4 21 L18 35" />
            </svg>
          </CollapseButton>
        </Indicator>
        <VolumeChart />

        <Indicator
          name="MACD" nameW={122} pillW={175}
          items={[
            { text: "DIF:2.97", w: 172, ml: 5, dir: "down", color: INK },
            { text: "DEA:3.10", w: 194, ml: 23, dir: "down", color: YELLOW },
            { text: "M:-0.27", w: 163, ml: 24, dir: "down", color: PURPLE },
          ]}
        />
        <MacdChart />

        <Indicator
          name="KDJ" nameW={75} pillW={128}
          items={[
            { text: "K:48.28", w: 155, ml: 4, dir: "down", color: INK },
            { text: "D:64.87", w: 160, ml: 24, gap: 13, dir: "down", color: YELLOW },
            { text: "J:15.11", w: 148, ml: 26, gap: 13, dir: "down", color: PURPLE },
          ]}
        />
        <KdjChart />

        <Indicator
          name="BOLL" nameW={105} pillW={156}
          items={[
            { text: "MID:33.91", w: 212, ml: 4, gap: 13, dir: "up", color: INK },
            { text: "UP:43.10", w: 189, ml: 22, dir: "down", color: YELLOW },
            { text: "LOW:24.71", w: 231, ml: 24, gap: 13, dir: "up", color: PURPLE },
          ]}
        />
        <BollChart />
        <TimeAxis />
        <Markers />
      </ChartArea>

      <BannerSlot>
        <Banner>
          <svg width="55" height="56" viewBox="0 0 55 56" fill="#d86227">
            <rect x="0" y="16" width="7" height="18" />
            <path d="M11 17 L54 1 V52 L11 36 Z" />
          </svg>
          <BannerText>策略命中这只个股！提前埋伏，构建自己的投资策略</BannerText>
          <BannerDivider />
          <svg width="40" height="46" viewBox="0 0 40 46" stroke="#cf6330" strokeWidth="3.400">
            <path d="M1 6 L38 43 M38 6 L1 43" />
          </svg>
        </Banner>
      </BannerSlot>

      <BottomBar>
        <IndexBlock>
          <IndexArrow />
          <IndexValue><Fit w={171} size={48} color={RED}>3608.83</Fit></IndexValue>
          <IndexRow>
            <Fit w={81} size={42} color={GREY}>上证</Fit>
            <Fit w={119} size={44} color={RED}>0.71%</Fit>
          </IndexRow>
        </IndexBlock>
        {actions.map((a) => (
          <Action key={a.icon}>
            <svg width="80" height="80" viewBox="0 0 80 80" fill="none" stroke={GREY} strokeWidth="3.200">
              {actionIcons[a.icon]}
            </svg>
            <Fit w={a.w} size={41}>{a.label}</Fit>
          </Action>
        ))}
      </BottomBar>

      <SystemNav>
        <NavSlot>
          <svg width="56" height="56" viewBox="0 0 56 56" fill="none" stroke="#878787" strokeWidth="5">
            <rect x="4.500" y="4.500" width="47" height="47" rx="2" />
          </svg>
        </NavSlot>
        <NavSlot>
          <svg width="60" height="60" viewBox="0 0 60 60" fill="none" stroke="#878787" strokeWidth="5">
            <circle cx="30" cy="30" r="26" />
          </svg>
        </NavSlot>
        <NavSlot>
          <svg width="60" height="60" viewBox="0 0 60 60" fill="none" stroke="#878787" strokeWidth="4.600" strokeLinejoin="round">
            <path d="M48.500 3.500 V56.500 L4 30 Z" />
          </svg>
        </NavSlot>
      </SystemNav>
    </Screen>
  );
}
